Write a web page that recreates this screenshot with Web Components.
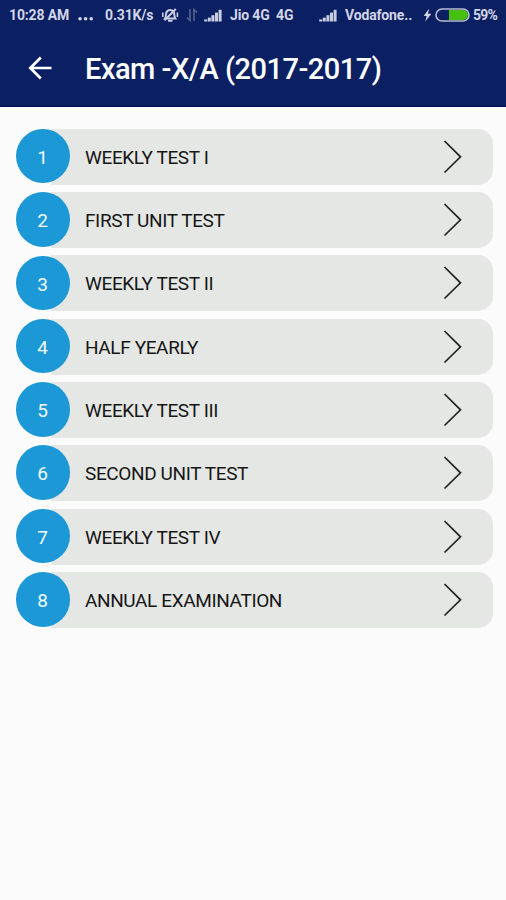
<!DOCTYPE html>
<html lang="en">
<head>
  <meta charset="utf-8">
  <title>Exam</title>
  <style>
    body {
      margin: 0;
      min-height: 900px;
      background: #fbfbfb;
      font-family: Roboto, "Liberation Sans", sans-serif;
    }
  </style>
</head>
<body>
  <status-bar></status-bar>
  <app-bar>Exam -X/A (2017-2017)</app-bar>
  <exam-list>
    <exam-row number="1">WEEKLY TEST I</exam-row>
    <exam-row number="2">FIRST UNIT TEST</exam-row>
    <exam-row number="3">WEEKLY TEST II</exam-row>
    <exam-row number="4">HALF YEARLY</exam-row>
    <exam-row number="5">WEEKLY TEST III</exam-row>
    <exam-row number="6">SECOND UNIT TEST</exam-row>
    <exam-row number="7">WEEKLY TEST IV</exam-row>
    <exam-row number="8">ANNUAL EXAMINATION</exam-row>
  </exam-list>

  <script>
    class SignalBars extends HTMLElement {
      constructor() {
        super();
        this.attachShadow({ mode: "open" });
        this.shadowRoot.innerHTML = `
        <style>
          :host { display: block; height: 13px; }
          svg { display: block; }
        </style>
        <svg width="19" height="13" viewBox="0 0 19 13" fill="#c9cde0">
          <rect x="0.2" y="10.4" width="3" height="2.1"/>
          <rect x="3.8" y="8.6" width="3" height="3.9"/>
          <rect x="7.4" y="6.2" width="3" height="6.3"/>
          <rect x="11" y="3.6" width="3" height="8.9"/>
          <rect x="14.6" y="0.8" width="3" height="11.7"/>
        </svg>
        `;
      }
    }
    customElements.define("signal-bars", SignalBars);

    class StatusBar extends HTMLElement {
      constructor() {
        super();
        this.attachShadow({ mode: "open" });
        this.shadowRoot.innerHTML = `
        <style>
          :host {
            display: grid;
            grid-template-columns: 69px 27px 56px 25px 18px 26px 46px 43px 26px 78px 12px 38px 1fr;
            align-items: center;
            box-sizing: border-box;
            height: 30px;
            padding-left: 9px;
            background: #0b1f63;
            color: #d3d6e6;
            font-size: 14px;
            font-weight: 700;
            letter-spacing: -0.15px;
            line-height: 30px;
            white-space: nowrap;
          }
          svg { display: block; }
          #percent { letter-spacing: -0.8px; }
        </style>
        <span>10:28 AM</span>
        <svg width="17" height="14" viewBox="0 0 17 14" fill="#d3d6e6">
          <circle cx="2" cy="10.8" r="1.8"/><circle cx="7.6" cy="10.8" r="1.8"/><circle cx="13.2" cy="10.8" r="1.8"/>
        </svg>
        <span>0.31K/s</span>
        <svg width="18" height="18" viewBox="0 0 18 18" fill="none" stroke="#c9cde0" stroke-width="2">
          <path d="M4 12.500c1.300-1.800.5-4 1.400-6C6.900 3.300 11.300 3.300 12.800 6.200c.9 2 .1 4.200 1.500 6.300z"/>
          <path d="M7 14.800h4.500M14.800 3L3.500 14.300"/>
          <path d="M1.800 6.500v4.500M16.400 6.500v4.500" stroke-width="1.600"/>
        </svg>
        <svg width="13" height="14" viewBox="0 0 13 14" fill="none" stroke="#56638f" stroke-width="1.600">
          <path d="M4 1v11.500L1 9.500M8 13V1.500l3 3"/>
        </svg>
        <signal-bars></signal-bars>
        <span>Jio 4G</span>
        <span>4G</span>
        <signal-bars></signal-bars>
        <span>Vodafone..</span>
        <svg width="9" height="14" viewBox="0 0 9 14" fill="#d3d6e6">
          <path d="M6 0.800L0.700 8h3L2.200 13.500 8.400 5.800H5z"/>
        </svg>
        <svg width="36" height="14" viewBox="0 0 36 14">
          <path d="M14 2h14a5 5 0 0 1 0 10H14z" fill="#48c010"/>
          <rect x="1" y="1" width="33" height="12" rx="6" fill="none" stroke="#b9bdd2" stroke-width="1.600"/>
        </svg>
        <span id="percent">59%</span>
        `;
      }
    }
    customElements.define("status-bar", StatusBar);

    class AppBar extends HTMLElement {
      constructor() {
        super();
        this.attachShadow({ mode: "open" });
        this.shadowRoot.innerHTML = `
        <style>
          :host {
            display: flex;
            align-items: center;
            box-sizing: border-box;
            height: 77px;
            padding-left: 28px;
            background: #0b1f63;
            border-bottom: 1px solid #0a0d50;
            color: #fff;
          }
          svg { margin-right: 33px; }
          h1 {
            margin: 0;
            padding-top: 2px;
            font-size: 29px;
            font-weight: 500;
            letter-spacing: -0.5px;
            line-height: 74px;
            white-space: nowrap;
          }
        </style>
        <svg width="24" height="24" viewBox="0 0 24 24" fill="none" stroke="#fff" stroke-width="2.700">
          <path d="M23.500 12H2.500M12.800 1.500L2.300 12l10.500 10.500"/>
        </svg>
        <h1><slot></slot></h1>
        `;
      }
    }
    customElements.define("app-bar", AppBar);

    class ExamList extends HTMLElement {
      constructor() {
        super();
        this.attachShadow({ mode: "open" });
        this.shadowRoot.innerHTML = `
        <style>
          :host {
            display: flex;
            flex-direction: column;
            gap: 7.330px;
            padding: 21.700px 13.500px 0 15.500px;
          }
        </style>
        <slot></slot>
        `;
      }
    }
    customElements.define("exam-list", ExamList);

    class ExamRow extends HTMLElement {
      constructor() {
        super();
        this.attachShadow({ mode: "open" });
        this.shadowRoot.innerHTML = `
        <style>
          /* the grey bar starts behind the number circle */
          :host {
            display: flex;
            align-items: center;
            height: 56px;
            border-radius: 0 15px 15px 0;
            background: linear-gradient(to right, transparent 34px, #e5e7e4 36px);
            color: #161616;
          }
          #number {
            width: 54px;
            height: 54.500px;
            margin: 0 15.500px 1.200px 0;
            border-radius: 50%;
            background: #1b98d5;
            color: #f2faff;
            font-size: 19px;
            line-height: 57px;
            text-align: center;
          }
          #title {
            flex: 1;
            padding-top: 1px;
            font-size: 19px;
            letter-spacing: -0.380px;
            line-height: 55px;
            white-space: nowrap;
          }
          svg { margin-right: 30px; }
        </style>
        <div id="number"></div>
        <div id="title"><slot></slot></div>
        <svg width="20" height="34" viewBox="0 0 20 34" fill="none" stroke="#222" stroke-width="1.700">
          <path d="M1.500 1L17.500 16.800 1.500 32.500"/>
        </svg>
        `;
      }

      connectedCallback() {
        this.shadowRoot.querySelector("#number").textContent = this.getAttribute("number");
      }
    }
    customElements.define("exam-row", ExamRow);
  </script>
</body>
</html>
